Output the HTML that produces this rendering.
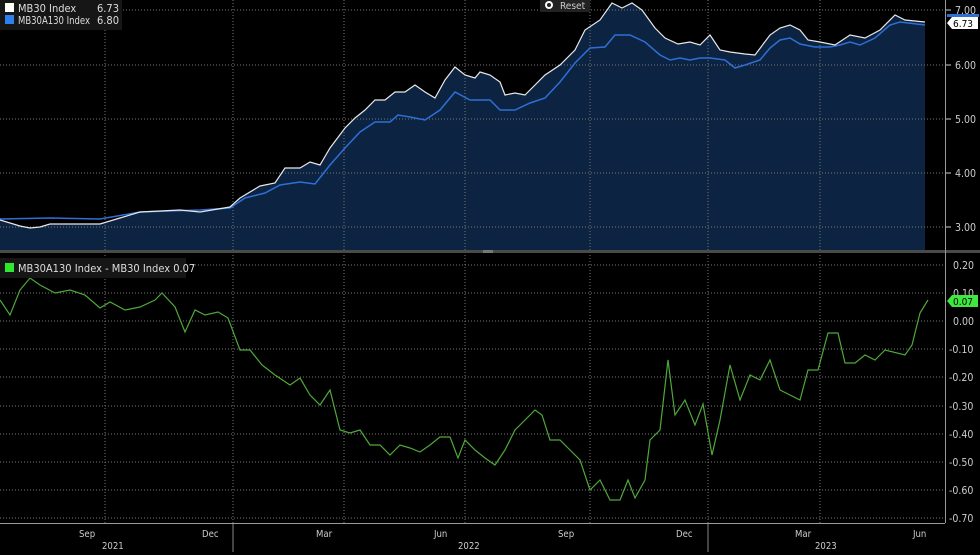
<!DOCTYPE html>
<html><head><style>
html,body{margin:0;padding:0;background:#000;width:980px;height:555px;overflow:hidden}
svg text{font-family:"DejaVu Sans Condensed","Liberation Sans",sans-serif}
</style></head><body>
<svg width="980" height="555" viewBox="0 0 980 555" xmlns="http://www.w3.org/2000/svg">
<rect width="980" height="555" fill="#000"/>
<polygon fill="#0c2341" points="0,220 20,226 30,228 40,227 50,224 100,224 120,218 140,212 180,210 200,212 230,207 240,198 260,186 275,183 285,168 300,168 310,162 320,165 330,148 345,128 355,118 365,110 375,100 385,100 395,92 405,92 415,85 425,92 435,98 445,80 455,67 465,75 475,78 480,72 490,75 500,82 505,95 515,93 525,95 535,85 545,75 560,65 575,50 585,30 600,20 612,3 622,8 632,3 642,10 655,28 665,38 678,44 690,42 700,45 710,35 720,50 730,52 745,54 755,55 770,35 780,28 790,25 800,30 808,40 820,42 835,45 850,35 865,38 880,30 895,15 905,20 925,22 925,250 0,250"/>
<g stroke="#777" stroke-width="1" stroke-dasharray="1,2" fill="none">
<line x1="0" y1="10" x2="945" y2="10"/><line x1="0" y1="65" x2="945" y2="65"/><line x1="0" y1="119" x2="945" y2="119"/><line x1="0" y1="173" x2="945" y2="173"/><line x1="0" y1="227" x2="945" y2="227"/>
<line x1="0" y1="265" x2="945" y2="265"/><line x1="0" y1="293" x2="945" y2="293"/><line x1="0" y1="321" x2="945" y2="321"/><line x1="0" y1="349" x2="945" y2="349"/><line x1="0" y1="377" x2="945" y2="377"/><line x1="0" y1="406" x2="945" y2="406"/><line x1="0" y1="434" x2="945" y2="434"/><line x1="0" y1="462" x2="945" y2="462"/><line x1="0" y1="490" x2="945" y2="490"/><line x1="0" y1="518" x2="945" y2="518"/>
<line x1="105" y1="0" x2="105" y2="523"/><line x1="233" y1="0" x2="233" y2="523"/><line x1="344" y1="0" x2="344" y2="523"/><line x1="465" y1="0" x2="465" y2="523"/><line x1="590" y1="0" x2="590" y2="523"/><line x1="708" y1="0" x2="708" y2="523"/><line x1="820" y1="0" x2="820" y2="523"/>
</g>
<polyline fill="none" stroke="#2e6fd6" stroke-width="1.5" points="0,219 50,218 100,219 140,212 200,210 230,208 245,198 265,193 280,185 300,182 315,184 330,165 345,148 360,132 375,122 390,122 398,115 410,117 425,120 440,110 455,92 470,100 490,100 500,110 515,110 530,103 545,98 560,82 575,63 590,48 605,47 615,35 630,35 645,42 660,55 670,60 680,58 690,60 700,58 710,58 725,60 735,68 745,65 760,60 770,48 780,40 790,38 800,44 815,47 830,47 840,45 850,42 860,45 875,38 890,25 900,22 925,25"/>
<polyline fill="none" stroke="#e8e8e8" stroke-width="1.2" points="0,220 20,226 30,228 40,227 50,224 100,224 120,218 140,212 180,210 200,212 230,207 240,198 260,186 275,183 285,168 300,168 310,162 320,165 330,148 345,128 355,118 365,110 375,100 385,100 395,92 405,92 415,85 425,92 435,98 445,80 455,67 465,75 475,78 480,72 490,75 500,82 505,95 515,93 525,95 535,85 545,75 560,65 575,50 585,30 600,20 612,3 622,8 632,3 642,10 655,28 665,38 678,44 690,42 700,45 710,35 720,50 730,52 745,54 755,55 770,35 780,28 790,25 800,30 808,40 820,42 835,45 850,35 865,38 880,30 895,15 905,20 925,22"/>
<rect x="0" y="250" width="980" height="3" fill="#4a4a4a"/>
<rect x="483" y="250" width="10" height="3" fill="#777"/>
<polyline fill="none" stroke="#4fa83a" stroke-width="1.2" points="0,300 10,315 20,290 30,278 40,285 55,293 70,290 85,295 100,308 110,302 125,310 140,307 155,300 162,293 175,307 185,332 195,310 205,315 218,312 228,318 240,350 250,350 262,365 275,375 290,385 300,378 310,395 320,405 330,390 340,430 350,433 360,430 370,445 380,445 390,455 400,445 410,448 420,452 430,445 440,437 450,437 458,458 465,440 475,450 485,458 495,465 505,450 515,430 525,420 535,410 542,415 550,440 560,440 570,450 580,460 590,490 600,480 610,500 620,500 628,480 635,498 645,480 650,440 660,430 668,360 675,415 685,400 695,425 703,404 712,455 720,420 730,365 740,400 750,375 760,380 770,360 780,390 790,395 800,400 808,370 818,370 828,333 838,333 845,363 855,363 865,355 875,360 885,350 905,355 912,345 920,313 928,300"/>
<rect x="0" y="0" width="122" height="30" fill="#161616"/>
<rect x="5" y="3" width="9" height="9" fill="#fff"/>
<text x="18" y="12" fill="#ddd" font-size="11">MB30 Index</text><text x="119" y="12" fill="#ddd" font-size="11" text-anchor="end">6.73</text>
<rect x="5" y="15" width="9" height="9" fill="#2e7ff0"/>
<text x="18" y="24" fill="#ddd" font-size="10.5" textLength="72" lengthAdjust="spacingAndGlyphs">MB30A130 Index</text><text x="119" y="24" fill="#ddd" font-size="11" text-anchor="end">6.80</text>
<rect x="540" y="0" width="50" height="12" fill="#222"/>
<circle cx="549" cy="5" r="3" fill="none" stroke="#fff" stroke-width="2"/>
<text x="560" y="9" fill="#ccc" font-size="10">Reset</text>
<rect x="0" y="258" width="186" height="20" fill="#161616"/>
<rect x="5" y="263" width="9" height="9" fill="#2ee82e"/>
<text x="18" y="272" fill="#ddd" font-size="11">MB30A130 Index - MB30 Index 0.07</text>
<line x1="945.5" y1="0" x2="945.5" y2="523" stroke="#999"/>
<g fill="#ccc" font-size="10.5">
<text x="955" y="14">7.00</text><text x="955" y="69">6.00</text><text x="955" y="123">5.00</text><text x="955" y="177">4.00</text><text x="955" y="231">3.00</text>
<text x="953" y="269">0.20</text><text x="953" y="297">0.10</text><text x="953" y="325">0.00</text><text x="949" y="353">-0.10</text><text x="949" y="381">-0.20</text><text x="949" y="410">-0.30</text><text x="949" y="438">-0.40</text><text x="949" y="466">-0.50</text><text x="949" y="494">-0.60</text><text x="949" y="522">-0.70</text>
</g>
<g stroke="#ccc"><line x1="946" y1="10" x2="951" y2="10"/><line x1="946" y1="65" x2="951" y2="65"/><line x1="946" y1="119" x2="951" y2="119"/><line x1="946" y1="173" x2="951" y2="173"/><line x1="946" y1="227" x2="951" y2="227"/></g>
<rect x="947" y="14" width="32" height="3" fill="#2e6fd6"/>
<path d="M947,23 L952,17 L978,17 L978,29 L952,29 Z" fill="#fff"/>
<text x="953" y="27" fill="#000" font-size="10">6.73</text>
<path d="M947,301 L952,295 L978,295 L978,307 L952,307 Z" fill="#3ee83e"/>
<text x="953" y="305" fill="#000" font-size="10">0.07</text>
<line x1="0" y1="523.5" x2="945" y2="523.5" stroke="#999"/>
<g fill="#ccc" font-size="9.5">
<text x="79" y="537">Sep</text><text x="202" y="537">Dec</text><text x="316" y="537">Mar</text><text x="434" y="537">Jun</text><text x="558" y="537">Sep</text><text x="676" y="537">Dec</text><text x="795" y="537">Mar</text><text x="913" y="537">Jun</text>
<text x="102" y="549">2021</text><text x="458" y="549">2022</text><text x="815" y="549">2023</text>
</g>
<g stroke="#888"><line x1="233" y1="524" x2="233" y2="552"/><line x1="708" y1="524" x2="708" y2="552"/></g>
</svg>
</body></html>
